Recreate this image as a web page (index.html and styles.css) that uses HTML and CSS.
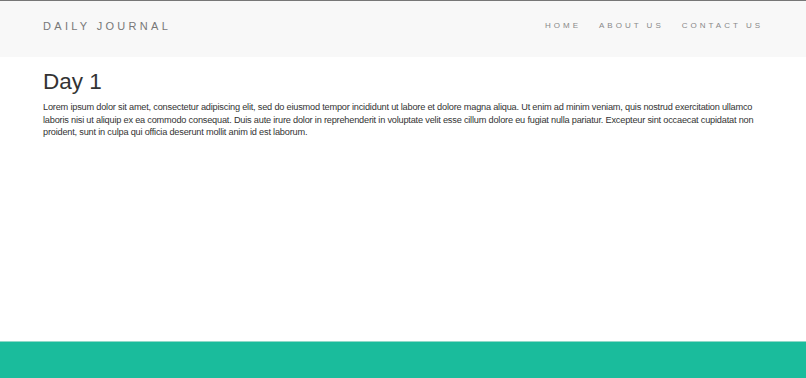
FILE: index.html
```html
<!DOCTYPE html>
<html lang="en">
  <head>
    <meta charset="UTF-8" />
    <meta name="viewport" content="width=device-width, initial-scale=1.0" />
    <title>Daily Journal</title>
    <link rel="stylesheet" href="styles.css">
  </head>
  <body>
    <nav class="navbar">
      <div class="container nav-inner">
        <a class="brand" href="#">DAILY JOURNAL</a>
        <ul class="nav-links">
          <li><a href="#">HOME</a></li>
          <li><a href="#">ABOUT US</a></li>
          <li><a href="#">CONTACT US</a></li>
        </ul>
      </div>
    </nav>

    <main class="container content">
      <h1 class="post-title">Day 1</h1>
      <p class="post-body">
        Lorem ipsum dolor sit amet, consectetur adipiscing elit, sed do eiusmod tempor incididunt ut labore et dolore magna aliqua. Ut enim ad minim veniam, quis nostrud exercitation ullamco laboris nisi ut aliquip ex ea commodo consequat. Duis aute irure dolor in reprehenderit in voluptate velit esse cillum dolore eu fugiat nulla pariatur. Excepteur sint occaecat cupidatat non proident, sunt in culpa qui officia deserunt mollit anim id est laborum.
      </p>
    </main>

    <footer class="footer"></footer>
  </body>
</html>
```

FILE: styles.css
```css
* {
  margin: 0;
  padding: 0;
  box-sizing: border-box;
}

html,
body {
  height: 100%;
}

body {
  display: flex;
  flex-direction: column;
  font-family: "Liberation Sans", Arial, sans-serif;
  color: #333333;
  background-color: #ffffff;
}

a {
  text-decoration: none;
}

.container {
  width: 750px;
  margin: 0 auto;
  padding: 0 15px;
}

.navbar {
  height: 57px;
  background-color: #f8f8f8;
  border-top: 1px solid #777777;
}

.nav-inner {
  display: flex;
  align-items: flex-start;
  justify-content: space-between;
}

.brand {
  font-size: 11px;
  letter-spacing: 3.3px;
  color: #777777;
  margin-top: 19px;
}

.nav-links {
  list-style: none;
  display: flex;
  gap: 18px;
  margin-top: 20px;
  font-size: 8px;
}

.nav-links a {
  letter-spacing: 3px;
  color: #888888;
}

.content {
  flex: 1;
}

.post-title {
  font-size: 22.5px;
  font-weight: normal;
  color: #333333;
  margin-top: 12px;
  margin-bottom: 6px;
}

.post-body {
  font-size: 9.2px;
  letter-spacing: -0.2px;
  line-height: 12.5px;
}

.footer {
  height: 37px;
  background-color: #1abc9c;
  border-top: 1px solid #8fd9c8;
}
```
